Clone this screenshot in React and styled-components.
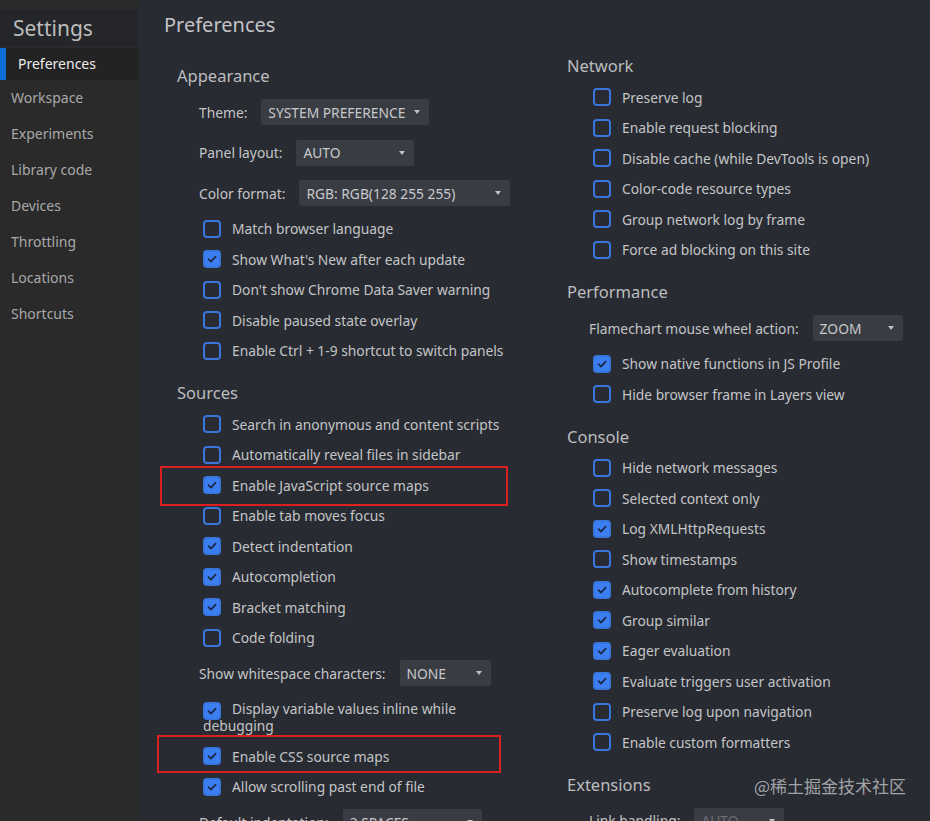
import React from 'react';
import styled, { createGlobalStyle } from 'styled-components';

const GlobalStyle = createGlobalStyle`
  body {
    margin: 0;
    background: #282b32;
    font-family: "Noto Sans", "Open Sans", sans-serif;
    overflow: hidden;
  }
`

const Page = styled.div`
  position: relative;
  display: flex;
  height: 821px;
  overflow: hidden;
`

const Sidebar = styled.div`
  width: 138px;
  flex-shrink: 0;
  background: #2a2a2b;
  padding-top: 10px;
`

const SidebarTitle = styled.div`
  height: 36px;
  line-height: 36px;
  padding-left: 13px;
  background: #252629;
  color: #bdbdbd;
  font-size: 21px;
  margin-bottom: 2px;
`

const NavItem = styled.div`
  position: relative;
  height: ${p => (p.$active ? '32px' : '36px')};
  line-height: ${p => (p.$active ? '32px' : '36px')};
  padding-left: ${p => (p.$active ? '18px' : '11px')};
  background: ${p => (p.$active ? '#232324' : 'transparent')};
  color: ${p => (p.$active ? '#ececec' : '#a9a9a9')};
  font-size: 14px;

  &::before {
    content: '';
    display: ${p => (p.$active ? 'block' : 'none')};
    position: absolute;
    left: 0;
    top: 0;
    bottom: 0;
    width: 6px;
    background: #0c6fd6;
  }
`

const Main = styled.div`
  flex: 1;
  padding-left: 26px;
`

const Title = styled.div`
  height: 43px;
  padding-top: 13px;
  line-height: 24px;
  color: #c3c4c6;
  font-size: 20px;
`

const Columns = styled.div`
  display: flex;
`

const Column = styled.div`
  width: ${p => p.$width}px;
  padding-top: ${p => p.$top || 0}px;
  flex-shrink: 0;
`

const Section = styled.div`
  margin-bottom: 17px;
`

const SectionTitle = styled.div`
  height: 20px;
  line-height: 20px;
  margin-bottom: 6px;
  padding-left: 13px;
  color: #bcbdbf;
  font-size: 16.5px;
`

const Items = styled.div`
  padding-left: 35px;
`

const CheckRow = styled.div`
  position: relative;
  height: 30.5px;
  display: flex;
  align-items: center;
  gap: 11px;
  padding-left: 4px;
  color: #c4c5c7;
  font-size: 13.8px;
  white-space: nowrap;
`

const WrapRow = styled.div`
  position: relative;
  width: 290px;
  padding: 6px 0 7.5px 4px;
  line-height: 17px;
  color: #c4c5c7;
  font-size: 13.8px;
`

const Box = styled.span`
  display: inline-flex;
  align-items: center;
  justify-content: center;
  box-sizing: border-box;
  width: 18px;
  height: 18px;
  flex-shrink: 0;
  border: 2px solid #3876dd;
  border-radius: 4px;
  background: ${p => (p.$checked ? '#3c7ff2' : 'transparent')};
  vertical-align: ${p => (p.$inline ? '-3px' : 'baseline')};
  margin: ${p => (p.$inline ? '-3px 11px -3px 0' : '0')};
`

const Mark = styled.div`
  position: absolute;
  left: ${p => p.$left}px;
  top: ${p => p.$top}px;
  width: ${p => p.$w}px;
  height: ${p => p.$h}px;
  box-sizing: border-box;
  border: 2px solid #dc1f1f;
  pointer-events: none;
`

const SelectRow = styled.div`
  height: 40.5px;
  display: flex;
  align-items: center;
  gap: 14px;
  color: #c4c5c7;
  font-size: 13.8px;
  white-space: nowrap;
`

const Select = styled.div`
  box-sizing: border-box;
  width: ${p => p.$width}px;
  height: 26px;
  display: flex;
  align-items: center;
  justify-content: space-between;
  padding: 0 7px;
  border-radius: 2px;
  background: #393c43;
  color: ${p => (p.$disabled ? '#6a6d73' : '#c8c9cb')};
  font-size: 13.8px;
  text-transform: uppercase;
`

const Arrow = styled.span`
  width: 0;
  height: 0;
  border-left: 3.5px solid transparent;
  border-right: 3.5px solid transparent;
  border-top: 4px solid #c0c0c0;
  margin-right: 2px;
`

const Watermark = styled.div`
  position: absolute;
  right: 24px;
  top: 774px;
  color: #a2a3a6;
  font-family: "Noto Sans CJK SC", "Noto Sans", sans-serif;
  font-size: 17px;
  line-height: 24px;
`

const CheckIcon = () => (
  <svg width="12" height="12" viewBox="0 0 12 12">
    <polyline points="2.5,6.2 5,8.6 9.6,3.6" fill="none" stroke="#1b2947" strokeWidth="1.8" strokeLinecap="round" strokeLinejoin="round" />
  </svg>
)

const Check = ({ checked, label, mark }) => (
  <CheckRow>
    <Box $checked={checked}>{checked && <CheckIcon />}</Box>
    {label}
    {mark && <Mark $left={mark[0]} $top={mark[1]} $w={mark[2]} $h={mark[3]} />}
  </CheckRow>
)

const Dropdown = ({ label, value, width, disabled }) => (
  <SelectRow>
    {label}
    <Select $width={width} $disabled={disabled}>
      {value}
      <Arrow />
    </Select>
  </SelectRow>
)

const nav = ['Workspace', 'Experiments', 'Library code', 'Devices', 'Throttling', 'Locations', 'Shortcuts']

const App = () => {
  return (
    <Page>
      <GlobalStyle />
      <Sidebar>
        <SidebarTitle>Settings</SidebarTitle>
        <NavItem $active>Preferences</NavItem>
        {nav.map(n => <NavItem key={n}>{n}</NavItem>)}
      </Sidebar>
      <Main>
        <Title>Preferences</Title>
        <Columns>
          <Column $width={390} $top={10}>
            <Section>
              <SectionTitle>Appearance</SectionTitle>
              <Items>
                <Dropdown label="Theme:" value="System preference" width={168} />
                <Dropdown label="Panel layout:" value="Auto" width={118} />
                <Dropdown label="Color format:" value="RGB: rgb(128 255 255)" width={211} />
                <Check label="Match browser language" />
                <Check checked label="Show What's New after each update" />
                <Check label="Don't show Chrome Data Saver warning" />
                <Check label="Disable paused state overlay" />
                <Check label="Enable Ctrl + 1-9 shortcut to switch panels" />
              </Items>
            </Section>
            <Section>
              <SectionTitle>Sources</SectionTitle>
              <Items>
                <Check label="Search in anonymous and content scripts" />
                <Check label="Automatically reveal files in sidebar" />
                <Check checked label="Enable JavaScript source maps" mark={[-39, -4, 348, 40]} />
                <Check label="Enable tab moves focus" />
                <Check checked label="Detect indentation" />
                <Check checked label="Autocompletion" />
                <Check checked label="Bracket matching" />
                <Check label="Code folding" />
                <Dropdown label="Show whitespace characters:" value="None" width={91} />
                <WrapRow>
                  <Box $checked $inline><CheckIcon /></Box>
                  Display variable values inline while debugging
                </WrapRow>
                <Check checked label="Enable CSS source maps" mark={[-42, -6, 344, 38]} />
                <Check checked label="Allow scrolling past end of file" />
                <Dropdown label="Default indentation:" value="2 spaces" width={139} />
              </Items>
            </Section>
          </Column>
          <Column $width={376}>
            <Section>
              <SectionTitle>Network</SectionTitle>
              <Items>
                <Check label="Preserve log" />
                <Check label="Enable request blocking" />
                <Check label="Disable cache (while DevTools is open)" />
                <Check label="Color-code resource types" />
                <Check label="Group network log by frame" />
                <Check label="Force ad blocking on this site" />
              </Items>
            </Section>
            <Section>
              <SectionTitle>Performance</SectionTitle>
              <Items>
                <Dropdown label="Flamechart mouse wheel action:" value="Zoom" width={90} />
                <Check checked label="Show native functions in JS Profile" />
                <Check label="Hide browser frame in Layers view" />
              </Items>
            </Section>
            <Section>
              <SectionTitle>Console</SectionTitle>
              <Items>
                <Check label="Hide network messages" />
                <Check label="Selected context only" />
                <Check checked label="Log XMLHttpRequests" />
                <Check label="Show timestamps" />
                <Check checked label="Autocomplete from history" />
                <Check checked label="Group similar" />
                <Check checked label="Eager evaluation" />
                <Check checked label="Evaluate triggers user activation" />
                <Check label="Preserve log upon navigation" />
                <Check label="Enable custom formatters" />
              </Items>
            </Section>
            <Section>
              <SectionTitle>Extensions</SectionTitle>
              <Items>
                <Dropdown label="Link handling:" value="Auto" width={90} disabled />
              </Items>
            </Section>
          </Column>
        </Columns>
      </Main>
      <Watermark>@稀土掘金技术社区</Watermark>
    </Page>
  )
}

export default App;
